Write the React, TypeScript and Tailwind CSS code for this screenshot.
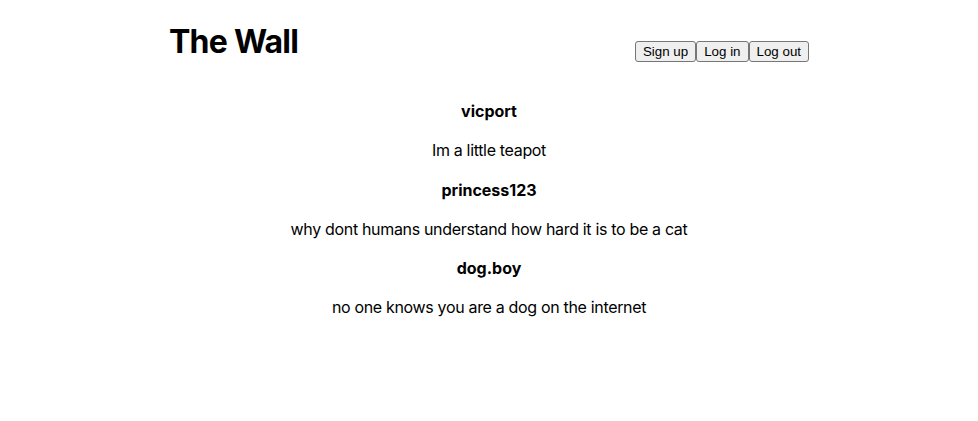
const posts = [
  { user: "vicport", text: "Im a little teapot" },
  { user: "princess123", text: "why dont humans understand how hard it is to be a cat" },
  { user: "dog.boy", text: "no one knows you are a dog on the internet" },
];

export default function App() {
  return (
    <div className="min-h-screen bg-white text-black font-['Inter',sans-serif]">
      <div className="w-[640px] mx-auto">
        {/* header */}
        <div className="flex justify-between items-start">
          <h1 className="text-[32px] font-bold leading-[39px] mt-[22px] tracking-[-0.75px]">The Wall</h1>
          <div className="flex mt-[41px]">
            {["Sign up", "Log in", "Log out"].map((b) => (
              <button
                key={b}
                className="h-[21px] px-[7px] bg-[#efefef] border border-[#767676] rounded-[3px] text-[13.33px] leading-none font-['Liberation_Sans',Arial,sans-serif] text-black"
              >
                {b}
              </button>
            ))}
          </div>
        </div>

        {/* posts */}
        <div className="flex flex-col items-center text-center text-[16px] leading-[23.3px] gap-4 mt-[38px]">
          {posts.map((p) => (
            <div key={p.user} className="flex flex-col items-center gap-4">
              <h4 className="font-bold">{p.user}</h4>
              <p className="tracking-[-0.33px]">{p.text}</p>
            </div>
          ))}
        </div>
      </div>
    </div>
  );
}
